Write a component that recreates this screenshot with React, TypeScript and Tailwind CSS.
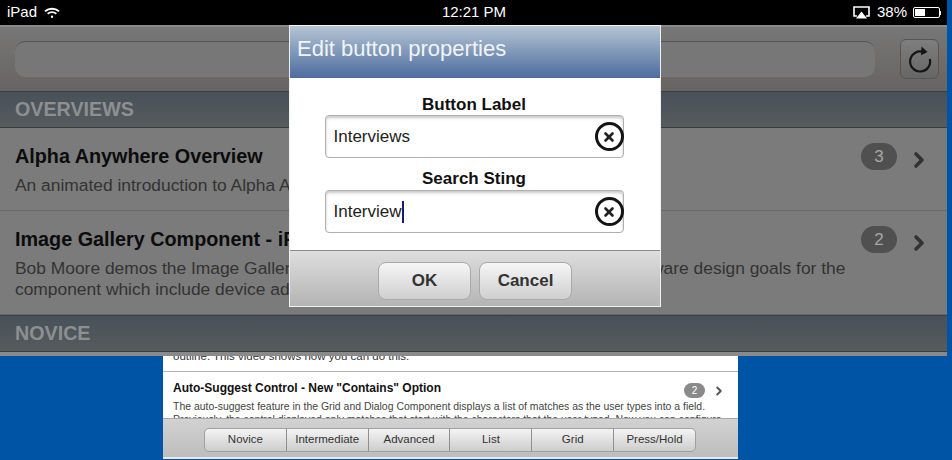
import { ChevronRight, X } from "lucide-react";

const sans = { fontFamily: '"Liberation Sans", Arial, sans-serif' };

function StatusBar() {
  return (
    <div className="flex h-[25px] items-center justify-between bg-black pl-[7px] pr-[6px] text-white">
      <div className="flex w-[200px] items-center gap-[7px] text-[15px]">
        <span>iPad</span>
        <svg width="16" height="12" viewBox="0 0 16 12" fill="none" stroke="#fff" strokeWidth="1.8">
          <path d="M1 4.2C5 .9 11 .9 15 4.2" />
          <path d="M3.6 6.8C6.2 4.8 9.8 4.8 12.4 6.8" />
          <circle cx="8" cy="9.8" r="1.2" fill="#fff" stroke="none" />
        </svg>
      </div>
      <div className="text-[15px] font-medium">12:21 PM</div>
      <div className="flex w-[200px] items-center justify-end gap-[6px] text-[15px]">
        <svg width="17" height="13" viewBox="0 0 17 13" className="mr-[1px]">
          <path d="M4 10H1V1h15v9h-3" fill="none" stroke="#fff" strokeWidth="1.6" />
          <path d="M8.5 5.5L14 12.5H3z" fill="#fff" />
        </svg>
        <span>38%</span>
        <div className="flex items-center">
          <div className="flex h-[11px] w-[27px] rounded-[2px] border border-white p-px">
            <div className="h-full w-[10px] bg-white" />
          </div>
          <div className="h-[4px] w-[1px] bg-white" />
        </div>
      </div>
    </div>
  );
}

function Toolbar() {
  return (
    <div className="flex h-[66px] items-center justify-between border-t-2 border-[#8a8a8a] bg-gradient-to-b from-[#777777] to-[#676462] pl-[15px] pr-[8px]">
      <div className="h-[36px] w-[860px] rounded-[10px] border-t border-[#555] bg-[#777777]" />
      <div className="flex h-[40px] w-[39px] items-center justify-center rounded-[6px] border border-[#555] bg-gradient-to-b from-[#7e7e7e] to-[#666666]">
        <svg width="26" height="28" viewBox="0 0 26 28" fill="none">
          <path d="M17 7.3A10 10 0 1 0 22.8 14" stroke="#151515" strokeWidth="2.2" />
          <path d="M14.5 1.5L20.5 7l-6.5 3.2z" fill="#151515" />
        </svg>
      </div>
    </div>
  );
}

function SectionHeader({ label }: { label: string }) {
  return (
    <div className="flex h-[37px] items-center border-y border-[#38403f] bg-gradient-to-b from-[#48515a] to-[#565b5d] pl-[15px] text-[19.7px] font-bold text-[#8d8f90]">
      {label}
    </div>
  );
}

function Row({
  title,
  lines,
  count,
  height,
}: {
  title: string;
  lines: string[];
  count: number;
  height: string;
}) {
  return (
    <div className={`flex justify-between border-b border-[#686868] bg-[#7b7b7b] pl-[15px] pr-[16px] ${height}`}>
      <div className="min-w-0 whitespace-nowrap pt-[14px]">
        <div className="text-[19.8px] leading-[28px] font-bold text-[#0c0c0c]">{title}</div>
        <div className="mt-[5px] text-[17.4px] leading-[21px] text-[#333333]">
          {lines.map((line) => (
            <div key={line}>{line}</div>
          ))}
        </div>
      </div>
      <div className="mt-[15px] flex h-[27px] shrink-0 items-center gap-[10px]">
        <div className="flex h-[27px] w-[36px] items-center justify-center rounded-full bg-[#505050] text-[17px] text-[#a8a8a8]">
          {count}
        </div>
        <ChevronRight size={24} strokeWidth={3.6} className="mt-[7px] text-[#333333]" />
      </div>
    </div>
  );
}

function ClearField({ value, caret }: { value: string; caret?: boolean }) {
  return (
    <div className="flex h-[43px] w-[299px] items-center justify-between rounded-[4px] border border-[#b0b0b0] bg-white pl-[8px] shadow-[inset_0_2px_3px_rgba(0,0,0,0.22)]">
      <div className="flex items-center text-[17px] font-normal text-[#222222]">
        {value}
        {caret && <span className="h-[22px] w-[2px] bg-[#1a1a70]" />}
      </div>
      <div className="-mr-[1px] flex h-[29px] w-[29px] items-center justify-center rounded-full border-[3px] border-[#141414] bg-white">
        <X size={14} strokeWidth={4.5} className="text-[#222222]" />
      </div>
    </div>
  );
}

function Dialog() {
  return (
    <div className="absolute left-[289px] top-[25px] flex h-[282px] w-[372px] flex-col border border-[#f0f0f0] bg-white">
      <div className="flex h-[52px] items-center bg-gradient-to-b from-[#b5c5d3] to-[#4d6c9e] pb-[8px] pl-[7px] text-[22px] text-[#f1f4f6]">
        Edit button properties
      </div>
      <div className="flex h-[172px] flex-col items-center bg-white pr-[2px] pt-[15px] text-[17px] font-bold text-[#111111]">
        <div className="leading-[24px]">Button Label</div>
        <div className="-mt-[2px]">
          <ClearField value="Interviews" />
        </div>
        <div className="mt-[9px] leading-[24px]">Search Sting</div>
        <div className="-mt-[1px]">
          <ClearField value="Interview" caret />
        </div>
      </div>
      <div className="flex flex-1 items-center justify-center gap-[8px] border-t border-[#8c8c8c] bg-gradient-to-b from-[#dedede] to-[#b4b4b4] pt-[4px]">
        <div className="flex h-[38px] w-[93px] items-center justify-center rounded-[8px] border border-[#a9a9a9] bg-gradient-to-b from-[#f6f6f6] to-[#cfcfcf] text-[17px] font-bold text-[#333333]">
          OK
        </div>
        <div className="flex h-[38px] w-[93px] items-center justify-center rounded-[8px] border border-[#a9a9a9] bg-gradient-to-b from-[#f6f6f6] to-[#cfcfcf] text-[17px] font-bold text-[#333333]">
          Cancel
        </div>
      </div>
    </div>
  );
}

const tabs = ["Novice", "Intermediate", "Advanced", "List", "Grid", "Press/Hold"];

function LowerPanel() {
  return (
    <div className="ml-[163px] flex h-[103px] w-[575px] flex-col overflow-hidden bg-white">
      <div className="h-[16px] overflow-hidden border-b border-[#b4b4b4] pl-[10px] text-[11.5px] leading-[1px] text-[#333333]">
        outline. This video shows how you can do this.
      </div>
      <div className="relative h-[46px] overflow-hidden whitespace-nowrap pl-[10px] pt-[8px]">
        <div className="text-[12px] leading-[16px] font-bold text-[#111111]">
          Auto-Suggest Control - New "Contains" Option
        </div>
        <div className="mt-[4px] text-[10.45px] leading-[13px] text-[#444444]">
          The auto-suggest feature in the Grid and Dialog Component displays a list of matches as the user types into a field.
          <br />
          Previously, the control displayed only matches that start with the characters that the user typed. Now you can configure
        </div>
        <div className="absolute left-[521px] top-[10px] flex items-center gap-[7px]">
          <div className="flex h-[15px] w-[21px] items-center justify-center rounded-full bg-[#8a8a8a] text-[10px] text-white">
            2
          </div>
          <ChevronRight size={14} strokeWidth={3.4} className="mt-[2px] text-[#555555]" />
        </div>
      </div>
      <div className="flex flex-1 items-start border-t border-b-2 border-t-[#a8a8a8] border-b-[#e8e8e8] bg-gradient-to-b from-[#d2d2d2] to-[#bdbdbd] pl-[41px] pt-[9px]">
        <div className="flex h-[24px] w-[492px] overflow-hidden rounded-[5px] border border-[#a0a0a0] bg-gradient-to-b from-[#f4f4f4] to-[#cdcdcd]">
          {tabs.map((tab) => (
            <div
              key={tab}
              className="flex flex-1 items-center justify-center border-r border-[#8f8f8f] text-[11.5px] text-[#333333] last:border-r-0"
            >
              {tab}
            </div>
          ))}
        </div>
      </div>
    </div>
  );
}

export default function App() {
  return (
    <div className="relative h-[460px] w-[952px] overflow-hidden bg-[#0054a6]" style={sans}>
      <div className="w-[947px] overflow-hidden">
        <StatusBar />
        <Toolbar />
        <SectionHeader label="OVERVIEWS" />
        <Row
          title="Alpha Anywhere Overview"
          lines={["An animated introduction to Alpha Anywhere and its features."]}
          count={3}
          height="h-[83px]"
        />
        <Row
          title="Image Gallery Component - iPad"
          lines={[
            "Bob Moore demos the Image Gallery Component for iPads and discusses the hardware design goals for the",
            "component which include device adaptation.",
          ]}
          count={2}
          height="h-[104px]"
        />
        <SectionHeader label="NOVICE" />
        <div className="h-[4px] bg-[#8a8a8a]" />
      </div>
      <LowerPanel />
      <Dialog />
    </div>
  );
}
